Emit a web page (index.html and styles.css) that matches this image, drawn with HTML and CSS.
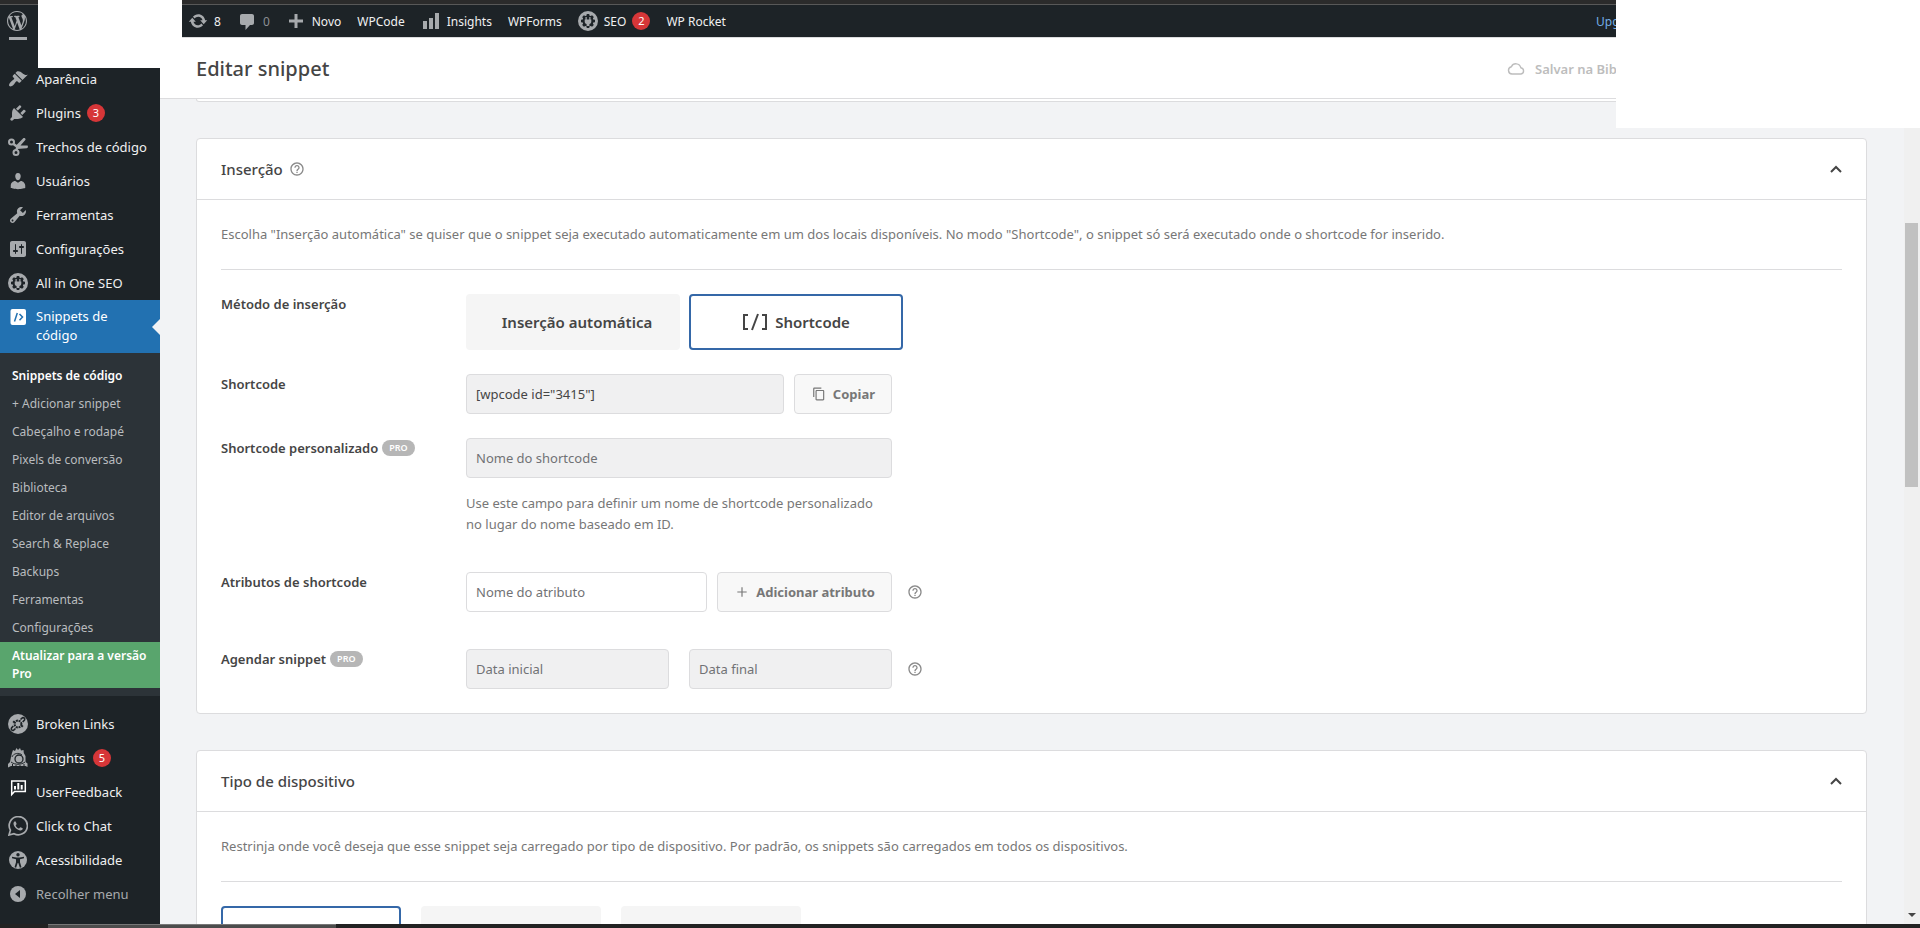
FILE: index.html
```html
<!DOCTYPE html>
<html lang="pt-BR">
<head>
<meta charset="utf-8">
<title>Editar snippet</title>
<link rel="stylesheet" href="styles.css">
</head>
<body>
<svg class="defs" aria-hidden="true">
  <symbol id="gear" viewBox="0 0 20 20">
    <path fill-rule="evenodd" d="M10 0a10 10 0 1 0 0 20 10 10 0 0 0 0-20zM8.800 3h2.400l.4 1.700 1 .4 1.500-.9 1.700 1.700-.9 1.500.4 1 1.700.4v2.400l-1.700.4-.4 1 .9 1.500-1.700 1.700-1.500-.9-1 .4-.4 1.700H8.800l-.4-1.700-1-.4-1.500.9-1.700-1.700.9-1.500-.4-1L3 11.200V8.800l1.700-.4.4-1-.9-1.500 1.700-1.700 1.500.9 1-.4z"/>
    <path d="M7.500 6v2.500H6.700v2.200c0 1.200.8 2 1.900 2.300V15h2.800v-2c1.100-.3 1.900-1.100 1.900-2.300V8.500h-.8V6h-1.200v2.500H8.700V6z"/>
  </symbol>
  <symbol id="help" viewBox="0 0 24 24">
    <path d="M11 18h2v-2h-2v2zm1-16C6.480 2 2 6.480 2 12s4.480 10 10 10 10-4.480 10-10S17.520 2 12 2zm0 18c-4.410 0-8-3.590-8-8s3.590-8 8-8 8 3.590 8 8-3.590 8-8 8zm0-14c-2.210 0-4 1.790-4 4h2c0-1.100.9-2 2-2s2 .9 2 2c0 2-3 1.750-3 5h2c0-2.250 3-2.500 3-5 0-2.210-1.790-4-4-4z"/>
  </symbol>
  <symbol id="chevron" viewBox="0 0 12 8">
    <path d="M1 7l5-5 5 5" fill="none" stroke="currentColor" stroke-width="2"/>
  </symbol>
</svg>

<div class="window-edge"></div>

<header class="adminbar">
  <a class="wp-logo" href="#" aria-label="WordPress"><svg class="icon" viewBox="0 0 20 20"><path d="M20 10c0-5.510-4.490-10-10-10C4.480 0 0 4.490 0 10c0 5.520 4.480 10 10 10 5.510 0 10-4.480 10-10zM7.780 15.370L4.370 6.220c.55-.02 1.170-.08 1.170-.08.5-.06.44-1.130-.06-1.110 0 0-1.450.11-2.370.11-.18 0-.37 0-.58-.01C4.120 2.690 6.870 1.110 10 1.110c2.330 0 4.450.87 6.050 2.340-.68-.11-1.650.39-1.650 1.580 0 .74.45 1.360.9 2.100.35.61.55 1.360.55 2.460 0 1.490-1.400 5-1.400 5l-3.030-8.370c.54-.02.82-.17.82-.17.5-.05.44-1.250-.06-1.220 0 0-1.440.12-2.380.12-.87 0-2.330-.12-2.330-.12-.5-.03-.56 1.200-.06 1.220l.92.08 1.260 3.410zM17.410 10c.24-.64.74-1.870.43-4.250.7 1.290 1.050 2.710 1.050 4.250 0 3.290-1.730 6.240-4.400 7.780.97-2.590 1.940-5.200 2.920-7.780zM6.100 18.090C3.120 16.650 1.110 13.530 1.110 10c0-1.300.23-2.480.72-3.590C3.250 10.300 4.670 14.200 6.100 18.090zm4.030-6.630l2.580 6.980c-.86.29-1.760.45-2.710.45-.79 0-1.570-.11-2.290-.33.81-2.380 1.620-4.740 2.420-7.100z"/></svg></a>
  <nav class="bar-items">
    <a href="#"><svg class="icon" viewBox="0 0 20 20"><path d="M10.200 3.280c3.530 0 6.430 2.610 6.920 6h2.080l-3.500 4-3.500-4h2.320c-.45-1.970-2.210-3.450-4.320-3.450-1.450 0-2.730.71-3.540 1.780L4.950 5.660C6.230 4.200 8.110 3.280 10.200 3.280zm-.4 13.440c-3.520 0-6.430-2.610-6.920-6H.8l3.500-4c1.170 1.330 2.330 2.670 3.500 4H5.480c.45 1.970 2.210 3.450 4.320 3.450 1.450 0 2.730-.71 3.540-1.780l1.710 1.950c-1.280 1.460-3.150 2.380-5.250 2.380z"/></svg>8</a>
    <a href="#" class="muted"><svg class="icon" viewBox="0 0 20 20"><path d="M5 3h10c1.100 0 2 .9 2 2v7c0 1.100-.9 2-2 2h-2l-4.500 5v-5H5c-1.100 0-2-.9-2-2V5c0-1.100.9-2 2-2z"/></svg>0</a>
    <a href="#"><svg class="icon" viewBox="0 0 20 20"><path d="M8.500 3h3v5.500H17v3h-5.500V17h-3v-5.500H3v-3h5.500z"/></svg>Novo</a>
    <a href="#">WPCode</a>
    <a href="#"><svg class="icon" viewBox="0 0 20 20"><path d="M2 10h4v8H2zM8 7h4v11H8zM14 2h4v16h-4z"/></svg>Insights</a>
    <a href="#">WPForms</a>
    <a href="#"><svg class="icon"><use href="#gear"/></svg>SEO<span class="badge">2</span></a>
    <a href="#">WP Rocket</a>
  </nav>
  <a class="upgrade" href="#">Upgrade to Pro</a>
</header>

<div class="workspace">
  <aside class="sidebar">
    <div class="cut-item"><i></i></div>
    <nav class="menu">
      <a href="#"><svg class="icon" viewBox="0 0 20 20"><path d="M14.480 11.060L7.410 3.990l1.500-1.500c.5-.56 2.300-.47 3.510.32 1.210.8 1.430 1.280 2.910 2.100 1.180.64 2.450 1.260 4.450.85zm-.71.71L6.700 4.700 4.930 6.470c-.39.39-.39 1.020 0 1.410l1.060 1.060c.39.39.39 1.030 0 1.420-.6.6-1.430 1.110-2.210 1.690-.35.26-.7.53-1.010.84C1.430 14.230.4 16.080 1.400 17.070c.99 1 2.840-.03 4.180-1.360.31-.31.58-.66.85-1.020.57-.78 1.080-1.610 1.690-2.210.39-.39 1.020-.39 1.410 0l1.060 1.060c.39.39 1.020.39 1.410 0z"/></svg>Aparência</a>
      <a href="#"><svg class="icon" viewBox="0 0 20 20"><path d="M13.110 4.360L9.870 7.600 8 5.730l3.240-3.240c.35-.34 1.050-.2 1.560.32.52.51.66 1.210.31 1.550zm-8 1.770l.91-1.120 9.010 9.010-1.190.84c-.71.71-2.630 1.160-3.820 1.160H6.140L4.900 17.260c-.59.59-1.540.59-2.120 0-.59-.58-.59-1.530 0-2.120l1.240-1.240v-3.880c0-1.130.4-3.190 1.090-3.890zm7.260 3.970l3.240-3.240c.34-.35 1.040-.21 1.550.31.52.51.66 1.210.31 1.550l-3.240 3.250z"/></svg>Plugins<span class="badge">3</span></a>
      <a href="#"><svg class="icon" viewBox="0 0 20 20"><g fill="none" stroke="currentColor"><circle cx="3.500" cy="5" r="2.500" stroke-width="2"/><circle cx="8" cy="15.500" r="2.500" stroke-width="2"/><path d="M5.500 7l4 3M8.500 13l1-4" stroke-width="2.400"/></g><path d="M8 8.500L15.500 1c1.300-.3 2.200.5 2 1.700L12.500 8.500l7 .1c.8.9.4 2.300-.8 2.700L9 12z"/></svg>Trechos de código</a>
      <a href="#"><svg class="icon" viewBox="0 0 20 20"><path d="M10 9.250c-2.270 0-2.730-3.440-2.730-3.440C7 4.020 7.820 2 9.970 2c2.160 0 2.980 2.020 2.710 3.810 0 0-.41 3.440-2.680 3.440zm0 2.570L12.720 10c2.390 0 4.520 2.330 4.520 4.530v2.490s-3.650 1.130-7.240 1.130c-3.650 0-7.240-1.130-7.240-1.130v-2.490c0-2.250 1.940-4.480 4.470-4.480z"/></svg>Usuários</a>
      <a href="#"><svg class="icon" viewBox="0 0 20 20"><path d="M16.680 9.770c-1.340 1.340-3.300 1.670-4.950.99l-5.410 6.520c-.99.99-2.590.99-3.580 0s-.99-2.590 0-3.570l6.520-5.420c-.68-1.650-.35-3.610.99-4.950 1.280-1.280 3.120-1.620 4.720-1.060l-2.890 2.890 2.820 2.820 2.860-2.870c.53 1.580.18 3.390-1.080 4.650zM3.810 16.210c.4.39 1.040.39 1.430 0 .4-.4.4-1.040 0-1.430-.39-.4-1.030-.4-1.430 0-.39.39-.39 1.030 0 1.430z"/></svg>Ferramentas</a>
      <a href="#"><svg class="icon" viewBox="0 0 20 20"><path d="M18 16V4c0-1.100-.9-2-2-2H4c-1.100 0-2 .9-2 2v12c0 1.100.9 2 2 2h12c1.100 0 2-.9 2-2zM8 11h1c.55 0 1 .45 1 1s-.45 1-1 1H8v1.500c0 .28-.22.5-.5.5s-.5-.22-.5-.5V13H6c-.55 0-1-.45-1-1s.45-1 1-1h1V5.500c0-.28.22-.5.5-.5s.5.22.5.5V11zm5-2h-1c-.55 0-1-.45-1-1s.45-1 1-1h1V5.500c0-.28.22-.5.5-.5s.5.22.5.5V7h1c.55 0 1 .45 1 1s-.45 1-1 1h-1v5.500c0 .28-.22.5-.5.5s-.5-.22-.5-.5V9z"/></svg>Configurações</a>
      <a href="#"><svg class="icon"><use href="#gear"/></svg>All in One SEO</a>
      <a href="#" class="current"><svg class="icon" viewBox="0 0 20 20"><rect x="2.500" y="2" width="15.500" height="16" rx="2" fill="#fff"/><path d="M9.300 6L6.500 14.500M11.500 7l3 3-3 3.200" fill="none" stroke="#2271b1" stroke-width="1.500"/></svg><span>Snippets de código</span></a>
    </nav>
    <nav class="submenu">
      <a href="#" class="selected">Snippets de código</a>
      <a href="#">+ Adicionar snippet</a>
      <a href="#">Cabeçalho e rodapé</a>
      <a href="#">Pixels de conversão</a>
      <a href="#">Biblioteca</a>
      <a href="#">Editor de arquivos</a>
      <a href="#">Search &amp; Replace</a>
      <a href="#">Backups</a>
      <a href="#">Ferramentas</a>
      <a href="#">Configurações</a>
      <a href="#" class="pro-link">Atualizar para a versão Pro</a>
    </nav>
    <nav class="menu">
      <a href="#"><svg class="icon" viewBox="0 0 20 20"><circle cx="10" cy="10" r="10"/><g fill="none" stroke="#1d2327" stroke-width="1.600"><circle cx="10" cy="10" r="3.400" stroke-dasharray="2 .7" stroke-width="2"/><path d="M12.500 5.500l1.800-1.700c1.600-.8 3 .8 2.200 2.200L14.700 8M5.300 12l-1.800 2c-.8 1.600.8 3 2.200 2.200L7.500 14.500M5 8.500l1.500-1.500M13.500 13l1.500-1.500"/></g></svg>Broken Links</a>
      <a href="#"><svg class="icon" viewBox="0 0 20 20"><path d="M4 5l1-3 2 1 1.500-3L10 2l2-2 1 2.500L15.500 2l.3 3 1.700 3v6l2 1.500V19l-2-1H3l-3 1.500V16l2-2 1-5z"/><g fill="none" stroke="#1d2327"><path d="M4 9c1-3.500 7-5 10-2" stroke-width=".9"/><circle cx="11" cy="11" r="4" stroke-width="1.300"/><path d="M3 14c4 3 10 3 14 0M4.500 16v4M8 17v3M12 17v3M16 16v4" stroke-width="1"/></g><path d="M9 9l3 1 1 3-3-.5z"/></svg>Insights<span class="badge spaced">5</span></a>
      <a href="#"><svg class="icon raised" viewBox="0 0 20 20"><path d="M3.700 3h13.600v10.500H6.500l-2.800 3z" fill="none" stroke="#fff" stroke-width="1.500"/><path d="M6 8h2v3.500H6zM9.300 5h2v6.500h-2zM12.700 7h2v4.500h-2z" fill="#fff"/></svg>UserFeedback</a>
      <a href="#"><svg class="icon" viewBox="0 0 20 20"><path d="M1 19l1.400-4.800A9.100 9.100 0 1 1 6 17.700z" fill="none" stroke="currentColor" stroke-width="1.700"/><path d="M7.200 5.200c-.9.1-1.700 1-1.700 2.300 0 3.100 4 7 6.900 7 1.400 0 2.400-.9 2.400-1.900 0-.4-2.200-1.400-2.500-1.300-.5.200-.9 1.200-1.300 1.200-1-.2-3.100-2-3.300-3.100.1-.4.9-1 .9-1.400s-.9-2.800-1.400-2.800z"/></svg>Click to Chat</a>
      <a href="#"><svg class="icon" viewBox="0 0 20 20"><circle cx="10" cy="10" r="9"/><g fill="#1d2327"><circle cx="10" cy="4.700" r="1.700"/><path d="M4 6.700l4.500.8h3l4.500-.8v1.600l-4 1v3l1.500 4.900-1.600.5L10.300 13h-.6l-1.600 4.700-1.600-.5L8 12.300v-3l-4-1z"/></g></svg>Acessibilidade</a>
      <a href="#" class="collapse"><svg class="icon" viewBox="0 0 20 20"><circle cx="10" cy="10" r="8"/><path d="M12 6v8l-5-4z" fill="#1d2327"/></svg>Recolher menu</a>
    </nav>
  </aside>

  <main class="main">
    <header class="page-head">
      <h1>Editar snippet</h1>
      <button class="save-library" type="button"><svg viewBox="0 0 18 12"><path d="M5 11a3.700 3.700 0 0 1-.6-7.300 5 5 0 0 1 9.400 1A3.200 3.200 0 0 1 14 11z" fill="none" stroke="currentColor" stroke-width="1.400"/></svg>Salvar na Biblioteca</button>
    </header>
    <div class="content">
      <div class="card-tail"></div>

      <section class="card">
        <header class="card-head">
          <h2>Inserção</h2>
          <svg class="help"><use href="#help"/></svg>
          <button class="toggle" type="button" aria-label="Recolher"><svg><use href="#chevron"/></svg></button>
        </header>
        <div class="card-body">
          <p class="intro">Escolha "Inserção automática" se quiser que o snippet seja executado automaticamente em um dos locais disponíveis. No modo "Shortcode", o snippet só será executado onde o shortcode for inserido.</p>
          <div class="row">
            <span class="label">Método de inserção</span>
            <div class="options">
              <button class="option auto" type="button">Inserção automática</button>
              <button class="option chosen" type="button"><svg viewBox="0 0 26 18"><path d="M6 2H2v14h4M20 2h4v14h-4M16 1l-6 16" fill="none" stroke="currentColor" stroke-width="2"/></svg>Shortcode</button>
            </div>
          </div>
          <div class="row">
            <label class="label" for="code">Shortcode</label>
            <div class="field"><input id="code" class="filled" value='[wpcode id="3415"]' readonly><button class="btn" type="button"><svg viewBox="0 0 24 24"><path d="M16 1H4c-1.100 0-2 .9-2 2v14h2V3h12V1zm3 4H8c-1.100 0-2 .9-2 2v14c0 1.100.9 2 2 2h11c1.100 0 2-.9 2-2V7c0-1.100-.9-2-2-2zm0 16H8V7h11v14z"/></svg>Copiar</button></div>
          </div>
          <div class="row">
            <label class="label" for="custom">Shortcode personalizado<span class="pro">PRO</span></label>
            <div>
              <div class="field"><input id="custom" class="filled" placeholder="Nome do shortcode"></div>
              <p class="hint">Use este campo para definir um nome de shortcode personalizado no lugar do nome baseado em ID.</p>
            </div>
          </div>
          <div class="row attributes">
            <label class="label" for="attr">Atributos de shortcode</label>
            <div class="field"><input id="attr" placeholder="Nome do atributo"><button class="btn" type="button"><svg viewBox="0 0 24 24"><path d="M11 4h2v7h7v2h-7v7h-2v-7H4v-2h7z"/></svg>Adicionar atributo</button></div>
            <svg class="help"><use href="#help"/></svg>
          </div>
          <div class="row">
            <label class="label" for="start">Agendar snippet<span class="pro">PRO</span></label>
            <div class="field dates"><input id="start" class="filled" placeholder="Data inicial"><input class="filled" aria-label="Data final" placeholder="Data final"></div>
            <svg class="help"><use href="#help"/></svg>
          </div>
        </div>
      </section>

      <section class="card">
        <header class="card-head">
          <h2>Tipo de dispositivo</h2>
          <button class="toggle" type="button" aria-label="Recolher"><svg><use href="#chevron"/></svg></button>
        </header>
        <div class="card-body">
          <p class="intro">Restrinja onde você deseja que esse snippet seja carregado por tipo de dispositivo. Por padrão, os snippets são carregados em todos os dispositivos.</p>
          <div class="devices">
            <button class="option chosen" type="button" aria-label="Todos"></button>
            <button class="option" type="button" aria-label="Desktop"></button>
            <button class="option" type="button" aria-label="Mobile"></button>
          </div>
        </div>
      </section>
    </div>
  </main>
  <div class="scrollbar"><i class="thumb"></i><i class="arrow"></i></div>
</div>

<footer class="taskbar"><i></i></footer>
<div class="cover cover-left"></div>
<div class="cover cover-step"></div>
<div class="cover cover-right"></div>
</body>
</html>
```

FILE: styles.css
```css
* { box-sizing: border-box; }
body {
  margin: 0;
  height: 100vh;
  display: flex;
  flex-direction: column;
  overflow: hidden;
  position: relative;
  font-family: "Noto Sans", "Open Sans", sans-serif;
  font-size: 13px;
  line-height: 21px;
  color: #454545;
  background: #f2f3f5;
}
a { color: inherit; text-decoration: none; }
button, input { font: inherit; color: inherit; }
h1, h2, p { margin: 0; }
svg { fill: currentColor; flex: none; }
.defs { position: absolute; width: 0; height: 0; }
.icon { width: 20px; height: 20px; color: #a7aaad; }

.window-edge { flex: none; height: 5px; background: #2b2b2b; border-bottom: 1px solid #585858; }

.adminbar {
  flex: none;
  height: 32px;
  display: flex;
  align-items: center;
  padding-left: 7px;
  background: #1d2327;
  color: #f0f0f1;
  font-size: 12px;
}
.adminbar a { display: flex; align-items: center; gap: 6px; white-space: nowrap; }
.bar-items { display: flex; gap: 16px; margin-left: 161px; }
.bar-items .muted { color: #8c8f94; }
.upgrade { margin-left: auto; width: 324px; color: #72aee6; }
.badge {
  flex: none;
  width: 18px;
  height: 18px;
  border-radius: 9px;
  background: #d63638;
  color: #fff;
  font-size: 11px;
  line-height: 18px;
  text-align: center;
}

.workspace { flex: 1; min-height: 0; display: flex; }
.sidebar { flex: none; width: 160px; background: #1d2327; color: #f0f0f1; overflow: hidden; }
.cut-item { height: 25px; padding-left: 9px; }
.cut-item i { display: block; width: 18px; height: 3px; background: #a7aaad; }
.menu a {
  position: relative;
  display: flex;
  align-items: center;
  gap: 8px;
  height: 34px;
  padding-left: 8px;
  line-height: 19px;
  white-space: nowrap;
}
.menu .badge { margin-left: -2px; }
.menu .spaced { margin-left: 0; }
.menu .raised { margin-bottom: 8px; }
.menu .collapse { color: #a7aaad; }
.menu .current {
  height: auto;
  align-items: flex-start;
  padding: 7px 40px 8px 8px;
  background: #2271b1;
  color: #fff;
  white-space: normal;
}
.menu .current::after {
  content: "";
  position: absolute;
  right: 0;
  top: 19px;
  border: 8px solid transparent;
  border-left: 0;
  border-right-color: #f2f3f5;
}
.submenu {
  margin-bottom: 11px;
  padding: 9px 0 8px;
  background: #2c3338;
  color: #b9bcbf;
  font-size: 12px;
}
.submenu a { display: block; padding: 5px 8px 5px 12px; line-height: 18px; }
.submenu .selected, .submenu .pro-link { color: #fff; font-weight: 600; }
.submenu .pro-link { background: #59a56d; }

.main { flex: 1; min-width: 0; overflow: hidden; }
.page-head {
  height: 62px;
  display: flex;
  align-items: center;
  padding: 2px 36px 0;
  background: #fff;
  border-top: 1px solid #dcdcde;
  border-bottom: 1px solid #dcdcde;
}
h1 { font-size: 20px; line-height: 28px; font-weight: 500; color: #454545; }
.save-library {
  display: flex;
  align-items: center;
  gap: 10px;
  width: 361px;
  margin-left: auto;
  padding: 0;
  border: 0;
  background: none;
  color: #bdbdbd;
  font-weight: 600;
}
.save-library svg { width: 18px; height: 12px; }

.content { padding: 0 37px 0 36px; }
.card-tail { height: 3px; background: #fff; border: 1px solid #dcdcde; border-top: 0; border-radius: 0 0 4px 4px; }
.card { margin-top: 36px; background: #fff; border: 1px solid #dcdcde; border-radius: 4px; }
.card-head {
  display: flex;
  align-items: center;
  gap: 6px;
  height: 61px;
  padding: 0 24px;
  border-bottom: 1px solid #dcdcde;
}
h2 { font-size: 15px; line-height: 21px; font-weight: 500; color: #454545; }
.help { width: 16px; height: 16px; color: #8a8a8a; }
.toggle { display: flex; margin-left: auto; padding: 0; border: 0; background: none; }
.toggle svg { width: 12px; height: 8px; }
.card-body { padding: 0 24px 24px; }
.intro { padding: 24px 0; border-bottom: 1px solid #dcdcde; color: #777; }

.row { display: flex; margin-top: 24px; }
.label { flex: none; width: 245px; font-weight: 600; }
.pro {
  display: inline-block;
  margin-left: 4px;
  padding: 0 7px;
  border-radius: 8px;
  background: #b6b6b6;
  color: #fff;
  font-size: 9px;
  line-height: 16px;
  vertical-align: 2px;
}
.options { display: flex; gap: 9px; }
.option {
  display: flex;
  align-items: center;
  justify-content: center;
  gap: 7px;
  width: 214px;
  height: 56px;
  padding: 0;
  border: 2px solid #f5f5f5;
  border-radius: 4px;
  background: #f5f5f5;
  font-size: 15px;
  font-weight: 600;
}
.option.auto { padding-left: 8px; }
.option.chosen { border-color: #3568a8; background: #fff; }
.option svg { width: 26px; height: 18px; }
.field { display: flex; gap: 10px; width: 426px; }
.field input {
  flex: 1;
  min-width: 0;
  height: 40px;
  padding: 0 9px;
  border: 1px solid #dcdcde;
  border-radius: 4px;
  background: #fff;
}
.field input.filled { background: #f0f0f1; }
.field input::placeholder { color: #717275; opacity: 1; }
.field.dates { gap: 20px; }
.btn {
  display: flex;
  align-items: center;
  gap: 7px;
  padding: 0 16px 0 17px;
  border: 1px solid #dcdcde;
  border-radius: 4px;
  background: #f8f8f8;
  color: #777;
  font-weight: 700;
}
.btn svg { width: 14px; height: 14px; }
.hint { width: 420px; margin-top: 15px; color: #777; }
.row.attributes { margin: 37px 0; }
.row .help { align-self: center; margin-left: 15px; }
.devices { display: flex; gap: 20px; margin-top: 24px; }
.devices .option { width: 180px; }

.scrollbar { position: relative; flex: none; width: 16px; background: #f0f0f0; }
.thumb { position: absolute; left: 1px; right: 2px; top: 186px; height: 264px; background: #c1c1c1; }
.arrow { position: absolute; left: 4px; bottom: 7px; border: 4px solid transparent; border-bottom: 0; border-top-color: #454545; }
.taskbar { flex: none; height: 4px; padding-left: 48px; background: #222; }
.taskbar i { display: block; width: 288px; height: 4px; background: #4c4c4c; border-top: 1px solid #777; }

.cover { position: absolute; top: 0; background: #fff; }
.cover-left { left: 38px; width: 144px; height: 38px; }
.cover-step { left: 38px; width: 122px; height: 68px; }
.cover-right { right: 0; width: 304px; height: 128px; }
```
